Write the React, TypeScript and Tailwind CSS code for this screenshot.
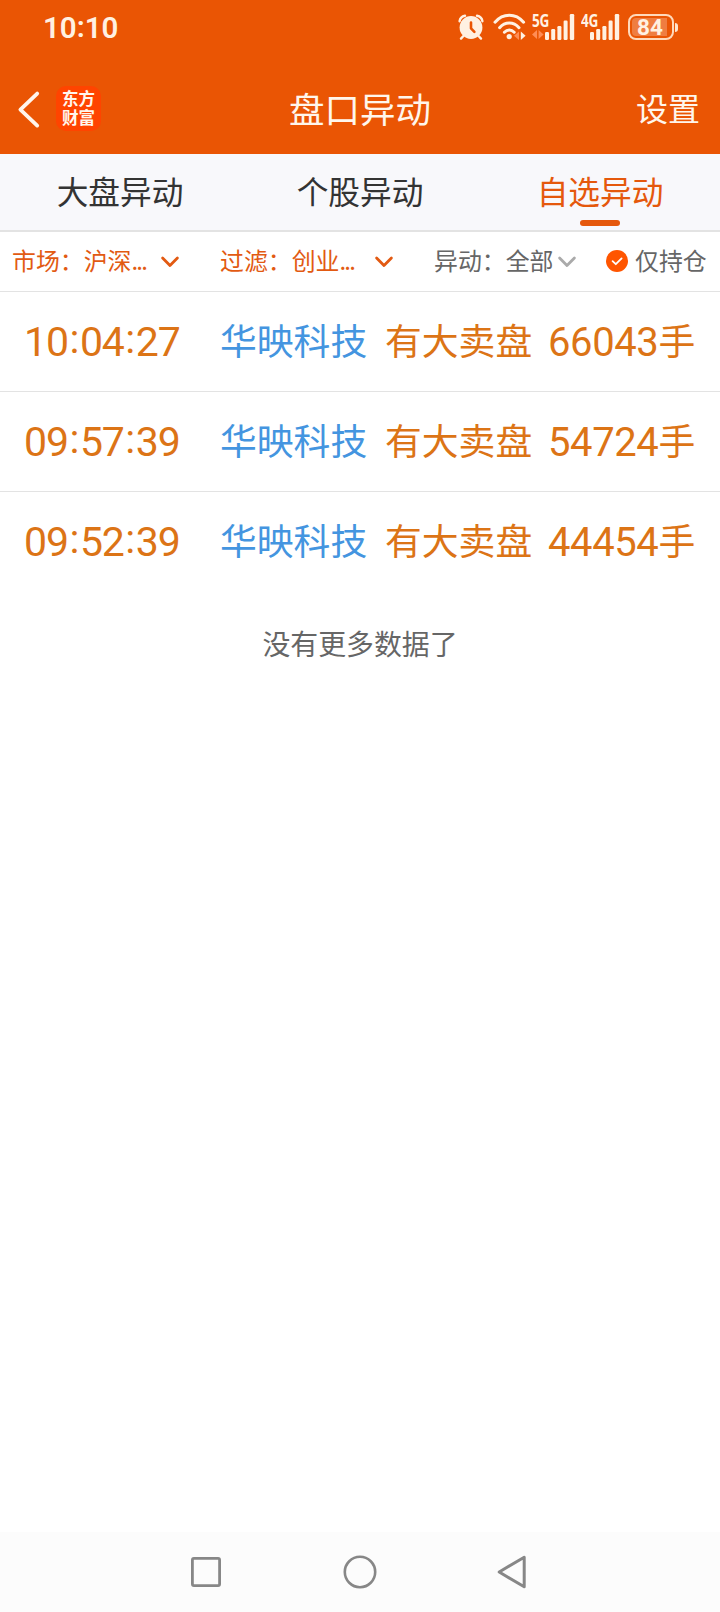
import React from 'react';

interface Alert {
  time: string;
  stock: string;
  event: string;
  amount: string;
}

const alerts: Alert[] = [
  { time: '10:04:27', stock: '华映科技', event: '有大卖盘', amount: '66043' },
  { time: '09:57:39', stock: '华映科技', event: '有大卖盘', amount: '54724' },
  { time: '09:52:39', stock: '华映科技', event: '有大卖盘', amount: '44454' },
];

const tabs = ['大盘异动', '个股异动', '自选异动'];

const SignalBars: React.FC<{ className?: string }> = ({ className }) => (
  <svg width="30" height="26" viewBox="0 0 30 26" fill="#fff1e2" className={className}>
    <rect x="0" y="18" width="4" height="8" rx="1.2" />
    <rect x="6.2" y="15" width="4" height="11" rx="1.2" />
    <rect x="12.4" y="12" width="4" height="14" rx="1.2" />
    <rect x="18.6" y="6.5" width="4" height="19.5" rx="1.2" />
    <rect x="24.8" y="0" width="4.4" height="26" rx="1.2" />
  </svg>
);

const Chevron: React.FC<{ className?: string }> = ({ className }) => (
  <svg width="20" height="14" viewBox="0 0 20 14" fill="none" stroke="currentColor" strokeWidth="2.8" strokeLinecap="round" strokeLinejoin="round" className={className}>
    <path d="M2.6 3 10 10.6 17.4 3" />
  </svg>
);

const StatusBar: React.FC = () => (
  <div className="flex h-[54px] items-start justify-between pl-[43px] pr-[42px] pt-[13px] text-[#fff1e2]">
    <div className="font-['Roboto',sans-serif] text-[29.5px] font-semibold leading-[30px]">
      10<span className="relative -top-px">:</span>10
    </div>
    <div className="flex items-start">
      <svg width="28" height="28" viewBox="0 0 28 28" fill="none">
        <circle cx="14" cy="14.5" r="11.4" fill="#fff1e2" />
        <path d="M2.6 8.2C3 5.4 5 3.4 8 2.8M25.4 8.2C25 5.4 23 3.4 20 2.8M6.4 23 4 25.6M21.6 23 24 25.6" stroke="#fff1e2" strokeWidth="2.4" strokeLinecap="round" />
        <path d="M14 9.5V15.3L17.4 18.8" stroke="#ea5504" strokeWidth="2.6" strokeLinecap="round" strokeLinejoin="round" />
      </svg>
      <svg width="36" height="28" viewBox="0 0 36 28" fill="none" className="ml-[7px]">
        <path d="M3 9.2C11-.1 23.6-.1 31.6 9.2M7.6 14.7C13 8.4 21.6 8.4 27 14.7M12.4 19.2C15.2 16.4 19.4 16.4 22.2 19.2" stroke="#fff1e2" strokeWidth="3" strokeLinecap="round" />
        <circle cx="17.2" cy="23.6" r="2.6" fill="#fff1e2" />
        <path d="M27 18.5V27L22 22.8Z" fill="#ff8d55" />
        <path d="M28.8 18.5V27L33.6 22.8Z" fill="#fff1e2" />
      </svg>
      <div className="relative ml-1 flex h-[28px] w-[43px] justify-end">
        <span className="absolute -top-px left-0 origin-left scale-x-[0.8] font-['Open_Sans',sans-serif] text-[17px] font-bold leading-[18px] tracking-[-0.5px]">5G</span>
        <svg width="12" height="10" viewBox="0 0 12 10" fill="#ff8d55" className="absolute bottom-px left-0">
          <path d="M5 0V9L0 4.5ZM6.6 0V9L11.6 4.5Z" />
        </svg>
        <SignalBars className="mt-px" />
      </div>
      <div className="relative ml-[6px] flex h-[28px] w-[39px] justify-end">
        <span className="absolute -top-px left-0 origin-left scale-x-[0.8] font-['Open_Sans',sans-serif] text-[17px] font-bold leading-[18px] tracking-[-0.5px]">4G</span>
        <SignalBars className="mt-px" />
      </div>
      <div className="ml-2 mt-px flex items-center">
        <div className="flex h-[26px] w-[46px] items-center rounded-[8px] border-[2.5px] border-[#ffd9bb] p-[2px]">
          <div className="flex h-full w-[35px] items-center justify-center rounded-l-[4px] bg-[#ef7d41] pl-[2px] font-['Roboto',sans-serif] text-[22.5px] font-bold leading-none">
            84
          </div>
        </div>
        <div className="ml-[1.5px] h-[9px] w-[3px] rounded-r-[3px] bg-[#ffe4cd]" />
      </div>
    </div>
  </div>
);

const Header: React.FC = () => (
  <div className="grid h-[100px] grid-cols-3 items-start text-[#fff6ec]">
    <div className="flex items-center pl-[17px] pt-8">
      <svg width="26" height="40" viewBox="0 0 26 40" fill="none" stroke="currentColor" strokeWidth="3.8" strokeLinecap="round" strokeLinejoin="round">
        <path d="M20.2 4.6 3.4 20.7 20.2 36.6" />
      </svg>
      <div className="ml-[13px] flex h-[45px] w-[45px] flex-col items-center justify-center rounded-[10px] bg-[#ff4400] pt-px font-['Liberation_Sans','Noto_Sans_CJK_SC',sans-serif] text-[16.5px] font-bold leading-[19px]">
        <span>东方</span>
        <span>财富</span>
      </div>
    </div>
    <h1 className="pt-[30px] text-center text-[35.5px] font-normal leading-[48px]">盘口异动</h1>
    <div className="pr-[20px] pt-[29px] text-right text-[32px] leading-[48px]">设置</div>
  </div>
);

export default function App() {
  return (
    <div className="flex h-[1612px] w-[720px] flex-col overflow-hidden bg-white font-['Noto_Sans_CJK_SC',sans-serif]">
      <div className="bg-[#ea5504]">
        <StatusBar />
        <Header />
      </div>

      {/* Tabs */}
      <div className="grid h-[78px] grid-cols-3 border-b-2 border-[#e3e3e3] bg-[#f8f8fb]">
        {tabs.map((tab, i) => (
          <div
            key={tab}
            className={`flex flex-col items-center pt-[12px] text-[31.7px] leading-[48px] ${i === 2 ? 'text-[#e5580c]' : 'text-[#333333]'}`}
          >
            {tab}
            {i === 2 && <div className="mt-[6px] h-[6px] w-10 rounded-[3px] bg-[#e5580c]" />}
          </div>
        ))}
      </div>

      {/* Filters */}
      <div className="grid h-[60px] grid-cols-[208px_214px_171px_1fr] items-center border-b border-[#e3e3e3] pl-3 text-[23.9px] leading-[36px] text-[#666666]">
        <div className="flex items-center whitespace-nowrap text-[#e25a12]">
          <span className="-mt-1">市场：沪深<span className="tracking-[-1.8px]">...</span></span>
          <Chevron className="ml-[14px]" />
        </div>
        <div className="flex items-center whitespace-nowrap text-[#e25a12]">
          <span className="-mt-1">过滤：创业<span className="tracking-[-1.8px]">...</span></span>
          <Chevron className="ml-5" />
        </div>
        <div className="flex items-center whitespace-nowrap">
          <span className="-mt-1">异动：全部</span>
          <Chevron className="ml-1 text-[#aaaaaa]" />
        </div>
        <div className="flex items-center whitespace-nowrap pl-px">
          <svg width="22" height="22" viewBox="0 0 22 22" fill="none" className="-mt-px">
            <circle cx="11" cy="11" r="11" fill="#ff5500" />
            <path d="M6.6 11.2 9.8 14.2 15.6 8.4" stroke="#fff" strokeWidth="1.8" strokeLinecap="round" strokeLinejoin="round" />
          </svg>
          <span className="-mt-1 ml-[7px]">仅持仓</span>
        </div>
      </div>

      {/* Alert list */}
      <div className="divide-y divide-[#e3e3e3]">
        {alerts.map((item) => (
          <div key={item.time} className="flex h-[100px] items-baseline whitespace-nowrap pl-6 pt-[20px] text-[36.8px] leading-[54px] text-[#dc7416]">
            <div className="relative top-px flex w-[196px] font-['Roboto',sans-serif] text-[41px] tracking-[-1.1px]">
              {item.time.split(':').map((part, i) => (
                <React.Fragment key={i}>
                  {i > 0 && <span className="relative -top-[3px] w-3 text-center">:</span>}
                  <span>{part}</span>
                </React.Fragment>
              ))}
            </div>
            <div className="w-[165px] text-[#4495e0]">{item.stock}</div>
            <div className="w-[163px]">{item.event}</div>
            <div>
              <span className="relative top-px font-['Roboto',sans-serif] text-[40px] tracking-[-0.4px]">{item.amount}</span>手
            </div>
          </div>
        ))}
      </div>

      <div className="flex-1 pt-[30px] text-center text-[27.9px] leading-[42px] text-[#666666]">没有更多数据了</div>

      {/* System navigation */}
      <div className="flex h-20 items-center justify-center bg-[#fcfcfc]">
        <svg width="34" height="34" viewBox="0 0 34 34" fill="none" stroke="#878787" strokeWidth="2.8">
          <rect x="3.4" y="3.4" width="27.2" height="27.2" rx="1.5" />
        </svg>
        <svg width="36" height="36" viewBox="0 0 36 36" fill="none" stroke="#878787" strokeWidth="2.6" className="ml-[119px] mr-[119px]">
          <circle cx="18" cy="18" r="15.2" />
        </svg>
        <svg width="34" height="36" viewBox="0 0 34 36" fill="none" stroke="#878787" strokeWidth="3" strokeLinejoin="round">
          <path d="M27.2 3.2V32.8L2.2 18Z" />
        </svg>
      </div>
    </div>
  );
}
